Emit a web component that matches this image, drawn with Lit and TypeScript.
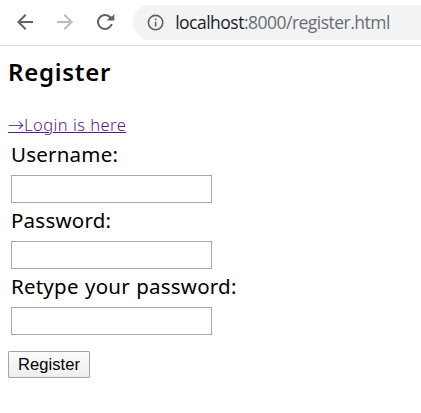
import { LitElement, html, css } from "lit";
import { customElement } from "lit/decorators.js";

@customElement("app-root")
export class AppRoot extends LitElement {
  static styles = css`
    :host { display: block; height: 413px; overflow: hidden; background: #fff; color: #000; font-family: "Noto Sans", sans-serif; }
    .toolbar { display: flex; align-items: center; height: 45px; border-bottom: 1px solid #d9dadc; padding-left: 13px; }
    .icon { width: 24px; height: 24px; fill: #5f6368; margin-right: 16px; flex: none; position: relative; top: -0.5px; }
    .off { fill: #babcbe; }
    .address { display: flex; align-items: center; flex: 1; height: 35px; border-radius: 18px 0 0 18px; background: #f1f3f4; padding-left: 13px; }
    .info { width: 19.2px; height: 19.2px; fill: #5f6368; margin-right: 10px; flex: none; }
    .url { font: 17.5px/35px "Open Sans", sans-serif; letter-spacing: -0.51px; color: #6a6e73; white-space: nowrap; }
    .host { color: #202124; }
    .page { padding: 8px; }
    h1 { margin: 0; font-size: 24px; line-height: 36px; height: 38px; font-weight: 600; letter-spacing: 0.72px; white-space: nowrap; }
    .row { display: flex; height: 25px; margin-top: 20px; font-size: 16.5px; line-height: 24px; }
    .link { color: #551a8b; font-weight: 300; text-decoration: underline; white-space: nowrap; letter-spacing: 0.47px; }
    .arrow { font-family: "Noto Sans CJK JP", sans-serif; letter-spacing: 0; font-size: 16px; }
    .fields { padding: 3px 3px 0; }
    label { display: block; height: 35px; line-height: 29px; font-size: 20.5px; white-space: nowrap; letter-spacing: 0.22px; word-spacing: 0.8px; }
    input { display: block; box-sizing: border-box; width: 201px; height: 28px; margin: 0 0 3px; border: 1px solid #a9a9a9; background: #fff; padding: 0; }
    button { display: block; box-sizing: border-box; width: 82px; height: 27px; margin-top: 16px; padding: 0; border: 1px solid #a5a5a5; border-radius: 1px; background: linear-gradient(#fbfbfb, #eee); color: #000; font: 16.5px "Liberation Sans", sans-serif; letter-spacing: 0.1px; }
  `;

  render() {
    return html`
      <div class="toolbar">
        <svg class="icon" viewBox="0 0 24 24"><path d="M20 11H7.83l5.59-5.59L12 4l-8 8 8 8 1.41-1.41L7.83 13H20v-2z"/></svg>
        <svg class="icon off" viewBox="0 0 24 24"><path d="M12 4l-1.41 1.41L16.17 11H4v2h12.17l-5.58 5.59L12 20l8-8z"/></svg>
        <svg class="icon" viewBox="0 0 24 24"><path d="M17.65 6.35A8 8 0 1 0 19.73 14h-2.08A6 6 0 1 1 16.22 7.78L14 10.5h7.3V4l-2.4 2.4z"/></svg>
        <div class="address">
          <svg class="info" viewBox="0 0 24 24"><path d="M11 7h2v2h-2zm0 4h2v6h-2zm1-9a10 10 0 1 0 0 20 10 10 0 0 0 0-20zm0 18a8 8 0 1 1 0-16 8 8 0 0 1 0 16z"/></svg>
          <span class="url"><span class="host">localhost</span>:8000/register.html</span>
        </div>
      </div>
      <main class="page">
        <h1>Register</h1>
        <div class="row"><a class="link"><span class="arrow">→</span>Login is here</a></div>
        <div class="fields">
          <label for="user">Username:</label>
          <input id="user" type="text" />
          <label for="pass">Password:</label>
          <input id="pass" type="password" />
          <label for="again">Retype your password:</label>
          <input id="again" type="password" />
        </div>
        <button>Register</button>
      </main>
    `;
  }
}
